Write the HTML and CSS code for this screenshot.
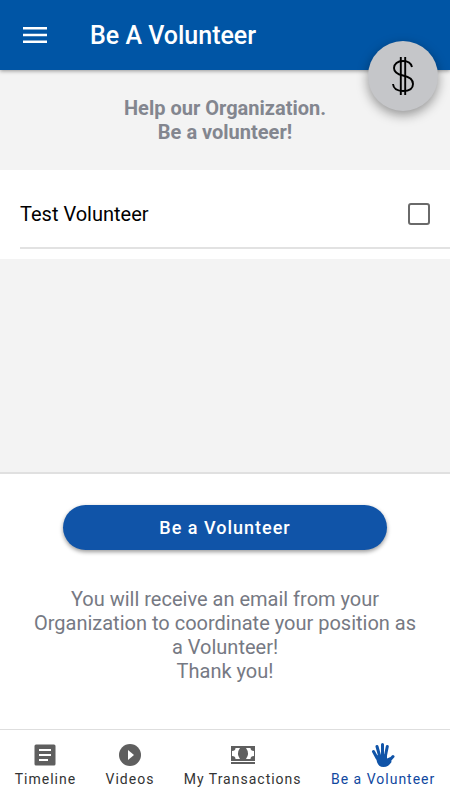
FILE: index.html
```html
<!DOCTYPE html>
<html lang="en">
<head>
    <meta charset="UTF-8">
    <meta name="viewport" content="width=device-width, initial-scale=1.0">
    <title>Be A Volunteer</title>
    <link rel="stylesheet" href="styles.css">
</head>
<body>
    <header class="toolbar">
        <button class="menu-button" type="button" aria-label="Menu">
            <svg width="24" height="16" viewBox="0 0 24 16" fill="#fff">
                <path d="M0 0h24v2.400H0zM0 6.800h24v2.400H0zM0 13.600h24V16H0z"/>
            </svg>
        </button>
        <h1>Be A Volunteer</h1>
        <button class="donate-button" type="button" aria-label="Donate">
            <svg width="22" height="40" viewBox="0 0 22 40" fill="none" stroke="#000" stroke-width="1.900">
                <path d="M20 11C19 7 16 5 11 5 5.500 5 2 8 2 12 2 17 6 18.500 11 19.500c6 1.200 10 3.500 10 8.500C21 33 17 35 11 35 5 35 1.500 33 1 28"/>
                <path d="M8.800 1v38M13.200 1v38"/>
            </svg>
        </button>
    </header>

    <main class="content">
        <h2 class="intro">Help our Organization.<br>Be a volunteer!</h2>
        <div class="volunteer-list">
            <div class="volunteer-item">
                <label for="testVolunteer">Test Volunteer</label>
                <input type="checkbox" id="testVolunteer">
            </div>
        </div>
    </main>

    <section class="submit-area">
        <button class="submit-button" type="button">Be a Volunteer</button>
        <p>You will receive an email from your Organization to coordinate your position as a Volunteer!<br>Thank you!</p>
    </section>

    <nav class="tab-bar">
        <a class="tab" href="#timeline">
            <svg width="26" height="26" viewBox="0 0 26 26" fill="#5f5f5f">
                <path fill-rule="evenodd" d="M4 2.500h18a1.500 1.500 0 0 1 1.500 1.500v18a1.500 1.500 0 0 1-1.500 1.500H4A1.500 1.500 0 0 1 2.500 22V4A1.500 1.500 0 0 1 4 2.500zM7 7v2h12V7zM7 12v2h12v-2zM7 17v2h9v-2z"/>
            </svg>
            <span>Timeline</span>
        </a>
        <a class="tab" href="#videos">
            <svg width="26" height="26" viewBox="0 0 26 26">
                <circle cx="13" cy="13" r="11" fill="#5f5f5f"/>
                <path d="M11 8v10l6-5z" fill="#fff"/>
            </svg>
            <span>Videos</span>
        </a>
        <a class="tab" href="#transactions">
            <svg width="26" height="26" viewBox="0 0 26 26">
                <path d="M1 4h24v15H1zM1 20h24v2H1z" fill="#5f5f5f"/>
                <path d="M5.500 6H10Q6 11.500 10 17H5.500q0-3-3.500-3V9q3.500 0 3.500-3zM20.500 6H16q4 5.500 0 11h4.500q0-3 3.500-3V9q-3.500 0-3.500-3z" fill="#fff"/>
            </svg>
            <span>My Transactions</span>
        </a>
        <a class="tab active" href="#volunteer">
            <svg width="26" height="26" viewBox="0 0 26 26" fill="none" stroke="#1054a8" stroke-width="3" stroke-linecap="round">
                <path d="M7 16L3.500 9.500M9.500 13.500L7 4.500M12.500 13V2.500M15.500 13.500L17.300 4.500M18 20L23 14.500"/>
                <path d="M5.500 13.500L17 12v4.500l3.500-1.500 1 5c-1.800 3-4.500 5-8 5-3.500 0-5.500-2-6.500-5z" fill="#1054a8" stroke="none"/>
            </svg>
            <span>Be a Volunteer</span>
        </a>
    </nav>
</body>
</html>
```
FILE: styles.css
```css
* {
    box-sizing: border-box;
}
body {
    margin: 0;
    min-height: 100vh;
    display: flex;
    flex-direction: column;
    font-family: Roboto, sans-serif;
    background-color: #f3f3f3;
    color: #000;
}
h1, h2, p {
    margin: 0;
}
button {
    border: none;
    padding: 0;
    font-family: inherit;
    cursor: pointer;
}
.toolbar {
    position: relative;
    display: flex;
    align-items: center;
    gap: 43px;
    height: 70px;
    padding: 0 23px;
    background-color: #0055a5;
    color: #fff;
    box-shadow: 0 1px 4px rgba(0, 0, 0, 0.4);
}
.toolbar h1 {
    font-size: 25px;
    font-weight: 500;
}
.menu-button {
    display: flex;
    background: none;
}
.donate-button {
    position: absolute;
    top: 41px;
    right: 12px;
    width: 70px;
    height: 70px;
    display: flex;
    align-items: center;
    justify-content: center;
    border-radius: 50%;
    background-color: #c5c6c9;
    box-shadow: 0 4px 12px rgba(0, 0, 0, 0.4);
}
.content {
    flex: 1;
}
.intro {
    padding: 26px 20px;
    font-size: 20px;
    line-height: 24px;
    font-weight: 700;
    text-align: center;
    color: #83868f;
}
.volunteer-list {
    padding-bottom: 10px;
    background-color: #fff;
}
.volunteer-item {
    display: flex;
    align-items: center;
    justify-content: space-between;
    margin-left: 20px;
    padding: 32px 20px 21px 0;
    border-bottom: 2px solid #e2e2e2;
    font-size: 20px;
    line-height: 24px;
}
.volunteer-item input {
    appearance: none;
    width: 22px;
    height: 22px;
    margin: 0;
    border: 2px solid #6a6a6a;
    border-radius: 3px;
    background-color: #fff;
}
.volunteer-item input:checked {
    background-color: #1054a8;
}
.submit-area {
    padding: 31px 32px 46px;
    border-top: 2px solid #e0e0e0;
    background-color: #fff;
    text-align: center;
}
.submit-button {
    width: 84%;
    height: 45px;
    border-radius: 23px;
    background-color: #1054a8;
    color: #fff;
    font-size: 18px;
    font-weight: 500;
    letter-spacing: 1px;
    box-shadow: 0 2px 4px rgba(0, 0, 0, 0.4);
}
.submit-area p {
    margin-top: 37px;
    font-size: 20px;
    line-height: 24px;
    color: #767983;
}
.tab-bar {
    display: flex;
    justify-content: space-around;
    padding: 12px 0;
    border-top: 1px solid #dedede;
    background-color: #fff;
}
.tab {
    display: flex;
    flex-direction: column;
    align-items: center;
    gap: 2px;
    color: #333;
    font-size: 14px;
    line-height: 18px;
    letter-spacing: 1px;
    text-decoration: none;
}
.tab.active {
    color: #1048a0;
}
```
